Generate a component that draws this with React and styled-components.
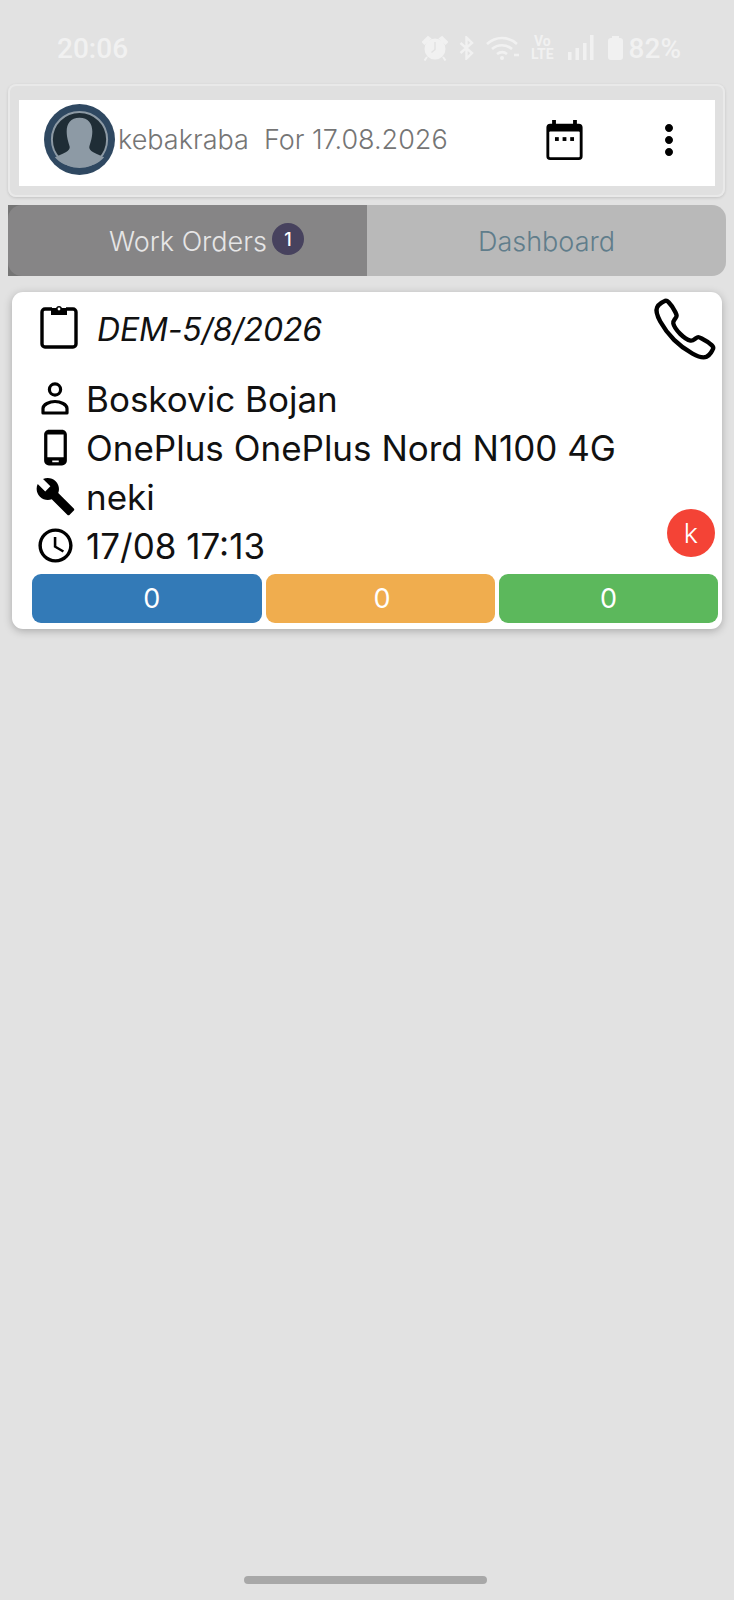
import React from "react";
import styled, { createGlobalStyle } from "styled-components";
import {
  MdBuild,
  MdMoreVert,
  MdOutlineAccessTime,
  MdOutlinePhoneAndroid,
} from "react-icons/md";
import { IoCallOutline } from "react-icons/io5";

const GlobalStyle = createGlobalStyle`
  html, body {
    margin: 0;
    padding: 0;
    background: #e2e2e2;
  }
  * {
    box-sizing: border-box;
  }
`;

const Page = styled.div`
  width: 734px;
  height: 1600px;
  display: flex;
  flex-direction: column;
  background: #e2e2e2;
  font-family: Inter, "Liberation Sans", sans-serif;
  overflow: hidden;
`;

const StatusBar = styled.div`
  height: 84px;
  padding: 12px 53px 0 57px;
  display: flex;
  align-items: center;
  justify-content: space-between;
  color: #f1f1f1;
  font-family: Roboto, sans-serif;
  font-weight: 500;
  font-size: 28px;
`;

const StatusIcons = styled.div`
  display: flex;
  align-items: center;
`;

const StatusSlot = styled.span`
  display: flex;
  align-items: center;
  margin-left: ${(p) => p.$gap}px;
`;

const VoLte = styled.div`
  display: flex;
  flex-direction: column;
  align-items: center;
  font-size: 14px;
  font-weight: 700;
  line-height: 13px;
`;

const Header = styled.div`
  height: 113px;
  margin: 0 9px 0 8px;
  padding: 16px 10px 11px 11px;
  background: #e0e0e0;
  border-radius: 8px;
  box-shadow: 0 1px 3px rgba(0, 0, 0, 0.14), inset 0 0 0 2px #e9e9e9;
`;

const HeaderInner = styled.div`
  height: 86px;
  display: flex;
  align-items: center;
  padding: 0 22px 7px 25px;
  background: #fff;
  color: #757575;
  font-size: 27px;
  font-weight: 300;
`;

const Avatar = styled.svg`
  width: 71px;
  height: 71px;
  flex: none;
`;

const UserText = styled.span`
  margin-left: 3px;
  white-space: pre;
`;

const HeaderActions = styled.div`
  margin-left: auto;
  display: flex;
  align-items: center;
  gap: 62px;
  color: #000;
`;

const Tabs = styled.div`
  height: 71px;
  margin: 8px 8px 0;
  display: flex;
  background: linear-gradient(to right, #757575 50%, transparent 50%);
  border-radius: 0 14px 14px 0;
`;

const Tab = styled.div`
  width: 50%;
  padding: 2px 0 0 ${(p) => (p.$active ? "38px" : "0")};
  display: flex;
  align-items: center;
  justify-content: center;
  gap: 5px;
  font-size: 27px;
  font-weight: 300;
  background: ${(p) => (p.$active ? "#868586" : "#b9b9b9")};
  color: ${(p) => (p.$active ? "#e6e6e6" : "#607d8b")};
  border-radius: ${(p) => (p.$active ? "14px 0 0 14px" : "0 14px 14px 0")};
`;

const Badge = styled.span`
  width: 32px;
  height: 32px;
  margin-top: -5px;
  border-radius: 50%;
  background: #47425e;
  color: #fff;
  font-size: 18px;
  font-weight: 500;
  display: flex;
  align-items: center;
  justify-content: center;
`;

const Card = styled.div`
  position: relative;
  height: 337px;
  margin: 16px 12px 0 12px;
  padding: 7px 4px 6px 20px;
  background: #fff;
  border-radius: 11px;
  box-shadow: 0 2px 8px rgba(0, 0, 0, 0.25);
  color: #111;
  display: flex;
  flex-direction: column;
`;

const TitleRow = styled.div`
  height: 60px;
  display: flex;
  align-items: center;
  padding-left: 8px;
  gap: 19px;
  font-size: 32px;
  font-style: italic;
  font-weight: 400;
  letter-spacing: -0.2px;

  svg {
    margin-top: -6px;
  }
`;

const InfoList = styled.div`
  margin-top: 15px;
  display: flex;
  flex-direction: column;
`;

const InfoRow = styled.div`
  height: 49px;
  display: flex;
  align-items: center;
  font-size: 35px;
  font-weight: 400;
  white-space: nowrap;
`;

const IconSlot = styled.span`
  width: 46px;
  margin-right: 8px;
  flex: none;
  display: flex;
  align-items: center;
  justify-content: center;
  color: #000;
`;

const CallIcon = styled(IoCallOutline)`
  position: absolute;
  top: 2px;
  right: 2px;
  color: #000;
`;

const InitialDot = styled.div`
  position: absolute;
  right: 7px;
  top: 217px;
  width: 48px;
  height: 48px;
  border-radius: 50%;
  background: #f44336;
  color: #fff;
  font-size: 27px;
  font-weight: 300;
  display: flex;
  align-items: center;
  justify-content: center;
`;

const Counters = styled.div`
  margin-top: auto;
  display: flex;
  gap: 4px;
`;

const Counter = styled.div`
  flex: ${(p) => p.$grow};
  height: 49px;
  padding-left: ${(p) => p.$nudge}px;
  border-radius: 9px;
  background: ${(p) => p.$color};
  color: #fff;
  font-size: 27px;
  display: flex;
  align-items: center;
  justify-content: center;
`;

const HomeBar = styled.div`
  width: 243px;
  height: 8px;
  margin: auto 0 16px 244px;
  border-radius: 4px;
  background: #a8a8a8;
`;

function Clipboard() {
  return (
    <svg width="38" height="46" viewBox="0 0 38 46">
      <path
        d="M12 6H5a3 3 0 0 0-3 3v32a3 3 0 0 0 3 3h28a3 3 0 0 0 3-3V9a3 3 0 0 0-3-3h-7"
        fill="none"
        stroke="#000"
        strokeWidth="3.4"
      />
      <path d="M11 5h5a3.2 3.2 0 0 1 6 0h5v7H11z" fill="#000" />
      <circle cx="19" cy="6" r="1.4" fill="#fff" />
    </svg>
  );
}

function Calendar() {
  return (
    <svg width="37" height="40" viewBox="0 0 38 42">
      <path d="M6 0h4v4h18V0h4v4h2a4 4 0 0 1 4 4v30a4 4 0 0 1-4 4H4a4 4 0 0 1-4-4V8a4 4 0 0 1 4-4h2z" fill="#000" />
      <rect x="3" y="12" width="32" height="27" rx="1" fill="#fff" />
      <rect x="9" y="18" width="4" height="4" fill="#000" />
      <rect x="17" y="18" width="4" height="4" fill="#000" />
      <rect x="25" y="18" width="4" height="4" fill="#000" />
    </svg>
  );
}

function Person() {
  return (
    <svg width="28" height="33" viewBox="0 0 28 33" fill="none" stroke="#000" strokeWidth="3.2">
      <circle cx="14" cy="7.500" r="5.600" />
      <path d="M2 31v-4.500c0-4 6.500-7 12-7s12 3 12 7V31z" strokeLinejoin="round" />
    </svg>
  );
}

function AvatarImage() {
  return (
    <Avatar viewBox="0 0 72 72">
      <circle cx="36" cy="36" r="36" fill="#2f4861" />
      <circle cx="36" cy="36" r="28" fill="#1f2d36" stroke="#8d9aa5" strokeWidth="2" />
      <path
        d="M36 14c-9 0-13 6-13 14 0 6 2 12 3 15 .6 2-1 4-4 6-4 2-8 4-11 5 5 6 13 10 25 10s20-4 25-10c-3-1-7-3-11-5-3-2-4.600-4-4-6 1-3 3-9 3-15 0-8-4-14-13-14z"
        fill="#8d9aa5"
      />
    </Avatar>
  );
}

function AlarmIcon() {
  return (
    <svg width="26" height="26" viewBox="0 0 26 26" fill="currentColor">
      <circle cx="13" cy="14" r="10.500" />
      <path d="M1 7l5-5 2 1.500-5.500 5zM25 7l-5-5-2 1.500 5.500 5zM5 22l-2.500 3.500M21 22l2.500 3.500" stroke="currentColor" strokeWidth="2" />
      <path d="M13 7v7.500l-3.500 3" fill="none" stroke="#e2e2e2" strokeWidth="1.400" />
    </svg>
  );
}

function BluetoothIcon() {
  return (
    <svg width="15" height="24" viewBox="0 0 15 24" fill="none" stroke="currentColor" strokeWidth="2.400">
      <path d="M1.500 7L13 17l-5.500 5.500v-21L13 7 1.500 17" />
    </svg>
  );
}

function WifiIcon() {
  return (
    <svg width="34" height="26" viewBox="0 0 34 26" fill="none" stroke="currentColor" strokeWidth="2.600">
      <path d="M1 9c9-8 21-8 30 0" />
      <path d="M6 14c6-5 14-5 20 0" />
      <path d="M11 19c3.500-2.500 7-2.500 10 0" />
      <circle cx="16" cy="23" r="2" fill="currentColor" stroke="none" />
      <path d="M28 20h5" />
    </svg>
  );
}

function SignalIcon() {
  return (
    <svg width="26" height="26" viewBox="0 0 26 26" fill="currentColor">
      <rect x="0" y="17" width="3.500" height="8" />
      <rect x="7.500" y="13" width="3.500" height="12" />
      <rect x="15" y="8" width="3.500" height="17" />
      <rect x="22" y="0" width="3.500" height="25" />
    </svg>
  );
}

function BatteryIcon() {
  return (
    <svg width="15" height="24" viewBox="0 0 15 24" fill="currentColor">
      <path d="M4 0h7v2h1a3 3 0 0 1 3 3v16a3 3 0 0 1-3 3H3a3 3 0 0 1-3-3V5a3 3 0 0 1 3-3h1z" />
    </svg>
  );
}

export default function App() {
  return (
    <Page>
      <GlobalStyle />
      <StatusBar>
        <span>20:06</span>
        <StatusIcons>
          <AlarmIcon />
          <StatusSlot $gap={11}><BluetoothIcon /></StatusSlot>
          <StatusSlot $gap={12}><WifiIcon /></StatusSlot>
          <StatusSlot $gap={11}>
            <VoLte>
              <span>Vo</span>
              <span>LTE</span>
            </VoLte>
          </StatusSlot>
          <StatusSlot $gap={14}><SignalIcon /></StatusSlot>
          <StatusSlot $gap={14}><BatteryIcon /></StatusSlot>
          <StatusSlot $gap={6}>82%</StatusSlot>
        </StatusIcons>
      </StatusBar>

      <Header>
        <HeaderInner>
          <AvatarImage />
          <UserText>kebakraba  For 17.08.2026</UserText>
          <HeaderActions>
            <Calendar />
            <MdMoreVert size={48} />
          </HeaderActions>
        </HeaderInner>
      </Header>

      <Tabs>
        <Tab $active>
          Work Orders
          <Badge>1</Badge>
        </Tab>
        <Tab>Dashboard</Tab>
      </Tabs>

      <Card>
        <TitleRow>
          <Clipboard />
          DEM-5/8/2026
        </TitleRow>
        <CallIcon size={70} />
        <InfoList>
          <InfoRow>
            <IconSlot>
              <Person />
            </IconSlot>
            Boskovic Bojan
          </InfoRow>
          <InfoRow>
            <IconSlot>
              <MdOutlinePhoneAndroid size={39} />
            </IconSlot>
            OnePlus OnePlus Nord N100 4G
          </InfoRow>
          <InfoRow>
            <IconSlot>
              <MdBuild size={41} />
            </IconSlot>
            neki
          </InfoRow>
          <InfoRow>
            <IconSlot>
              <MdOutlineAccessTime size={41} />
            </IconSlot>
            17/08 17:13
          </InfoRow>
        </InfoList>
        <InitialDot>k</InitialDot>
        <Counters>
          <Counter $grow={224} $nudge={10} $color="#337ab7">0</Counter>
          <Counter $grow={231} $nudge={3} $color="#f0ad4e">0</Counter>
          <Counter $grow={223} $nudge={0} $color="#5cb85c">0</Counter>
        </Counters>
      </Card>

      <HomeBar />
    </Page>
  );
}
